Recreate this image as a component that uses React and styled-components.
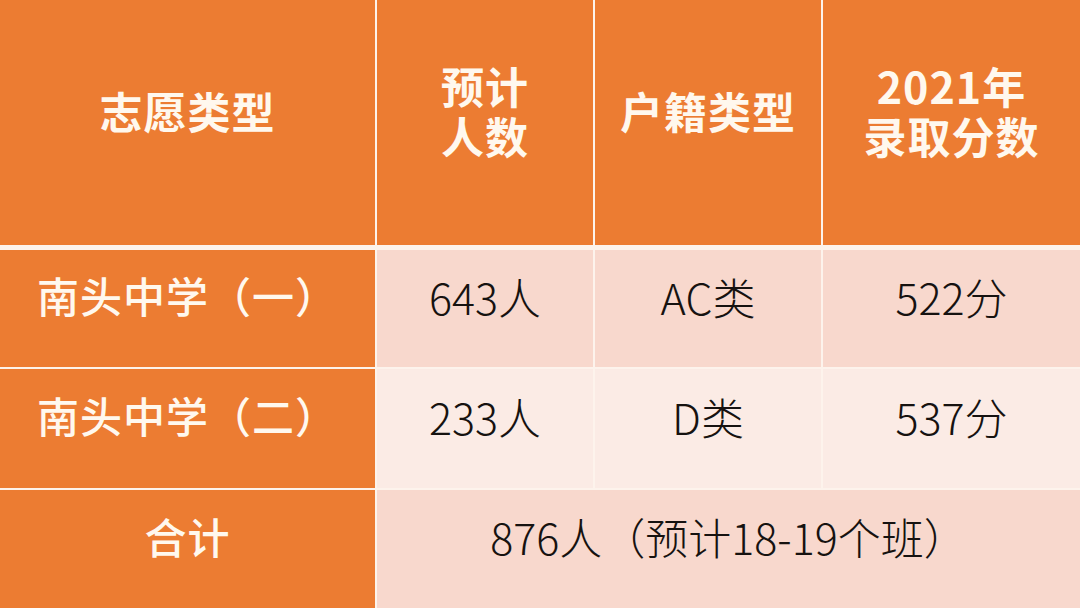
import React from "react";
import styled, { createGlobalStyle } from "styled-components";

const GlobalStyle = createGlobalStyle`
  html, body {
    margin: 0;
    padding: 0;
    background: #ffffff;
  }
  body {
    font-family: "Noto Sans CJK SC", "Noto Sans", sans-serif;
  }
`;

const Table = styled.div`
  width: 1080px;
  height: 608px;
  display: grid;
  grid-template-columns: 375px 216px 226px 1fr;
  grid-template-rows: 248px 117px 119px 1fr;
  column-gap: 2px;
  row-gap: 2px;
  background: #fdf3ec;
  overflow: hidden;
`;

const HeadCell = styled.div`
  display: flex;
  flex-direction: column;
  align-items: center;
  justify-content: center;
  gap: 7px;
  text-align: center;
  background: #ec7c32;
  color: #fff8ee;
  font-size: 43px;
  font-weight: 700;
  line-height: 1;
  letter-spacing: 1px;
  padding-bottom: 24px;
  border-bottom: 3px solid #fdf3ec;
  box-sizing: border-box;
`;

const HeadLine = styled.span`
  display: block;
`;

const LabelCell = styled.div`
  display: flex;
  align-items: center;
  justify-content: center;
  background: #ec7c32;
  color: #fff8ee;
  font-size: 42px;
  font-weight: 500;
  letter-spacing: 1px;
  padding-bottom: 28px;
  box-sizing: border-box;
`;

const DataCell = styled.div`
  display: flex;
  align-items: center;
  justify-content: center;
  background: ${(p) => (p.$light ? "#fbebe5" : "#f8d8cd")};
  color: #161210;
  font-size: 43px;
  font-weight: 300;
  padding-bottom: 26px;
  box-sizing: border-box;
  grid-column: ${(p) => p.$span || "auto"};
`;

const headers = [["志愿类型"], ["预计", "人数"], ["户籍类型"], ["2021年", "录取分数"]];

const rows = [
  { name: "南头中学（一）", count: "643人", type: "AC类", score: "522分" },
  { name: "南头中学（二）", count: "233人", type: "D类", score: "537分", light: true },
];

export default function App() {
  return (
    <>
      <GlobalStyle />
      <Table>
        {headers.map((lines) => (
          <HeadCell key={lines.join("")}>
            {lines.map((l) => (
              <HeadLine key={l}>{l}</HeadLine>
            ))}
          </HeadCell>
        ))}

        {rows.map((r) => (
          <React.Fragment key={r.name}>
            <LabelCell>{r.name}</LabelCell>
            <DataCell $light={r.light}>{r.count}</DataCell>
            <DataCell $light={r.light}>{r.type}</DataCell>
            <DataCell $light={r.light}>{r.score}</DataCell>
          </React.Fragment>
        ))}

        <LabelCell>合计</LabelCell>
        <DataCell $span="2 / 5">876人（预计18-19个班）</DataCell>
      </Table>
    </>
  );
}
